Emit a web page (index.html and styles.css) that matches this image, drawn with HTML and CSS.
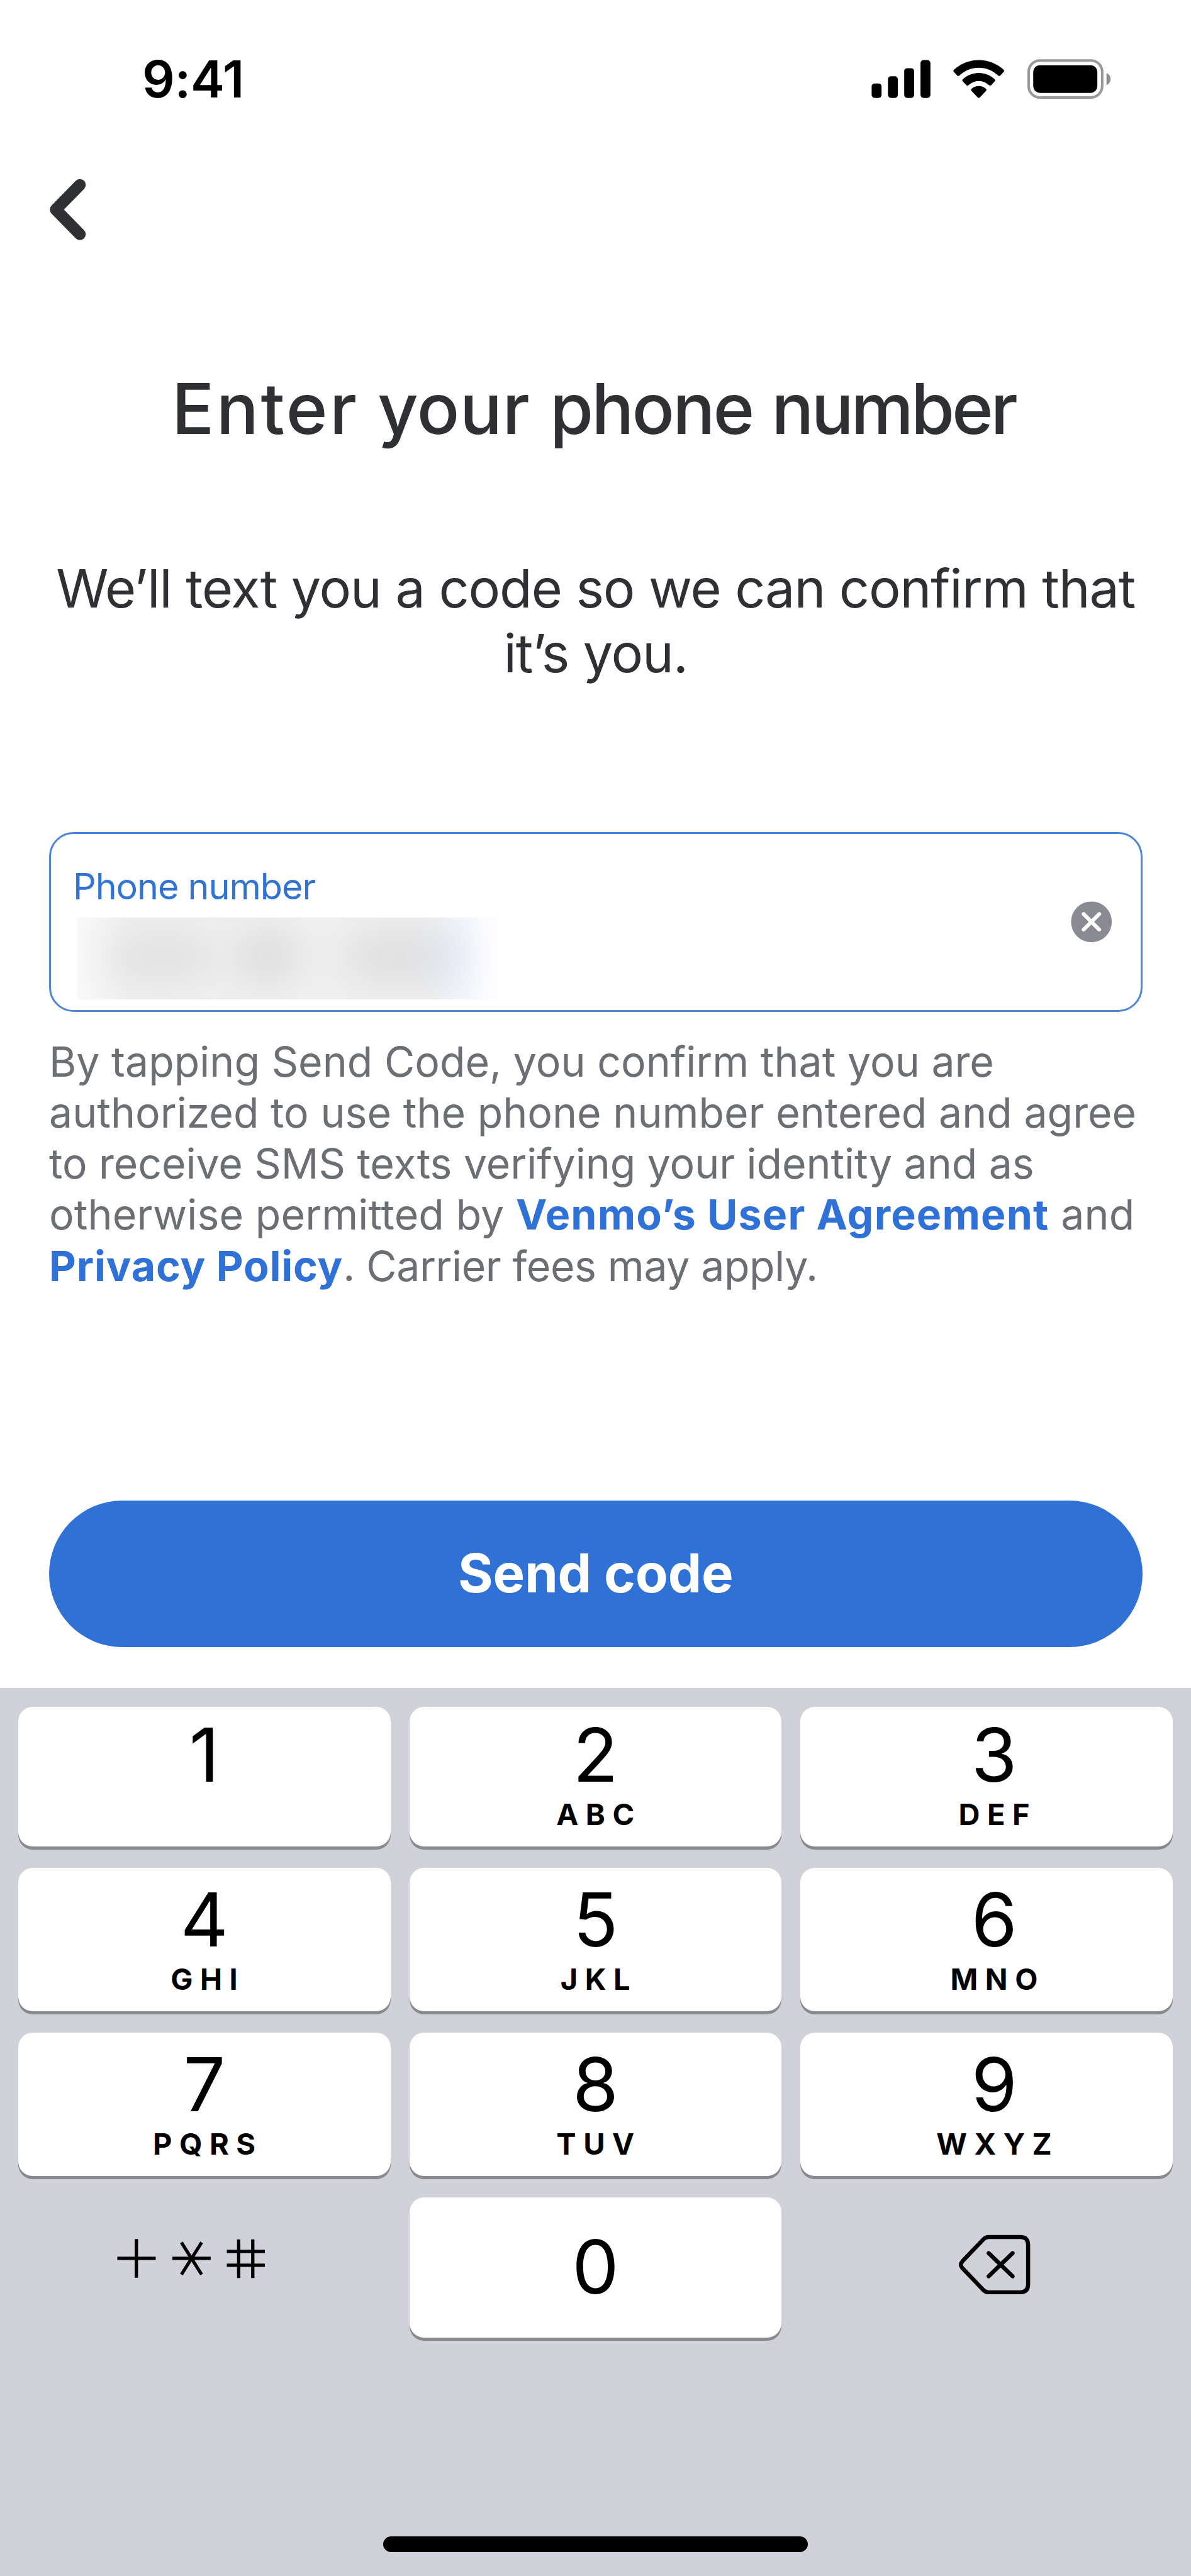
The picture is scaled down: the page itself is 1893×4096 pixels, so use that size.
FILE: index.html
```html
<!DOCTYPE html>
<html lang="en">
<head>
<meta charset="utf-8">
<title>Enter your phone number</title>
<link rel="stylesheet" href="styles.css">
</head>
<body>
<div class="screen">
  <main class="page">
    <div class="status">
      <span class="time">9:41</span>
      <svg class="status-icons" viewBox="1712 112 472 86" aria-hidden="true">
        <rect x="1712.5" y="163.5" width="19.5" height="28.5" rx="6"/>
        <rect x="1744.5" y="149.5" width="19.5" height="42.5" rx="6"/>
        <rect x="1776.5" y="133.5" width="19.5" height="58.5" rx="6"/>
        <rect x="1808.5" y="117.5" width="19.5" height="74.5" rx="6"/>
        <path d="M1923 117.600c18.400 0 35.500 7 48.700 18.900 1.400 1.300 1.400 3 .3 4.300l-6.800 7.200c-1.100 1.200-2.700 1.200-4 .1-10.300-9.700-23.700-15.400-38.200-15.400s-27.900 5.700-38.200 15.400c-1.300 1.100-2.900 1.100-4-.1l-6.800-7.200c-1.100-1.300-1.100-3 .3-4.300 13.200-11.900 30.300-18.900 48.700-18.900z"/>
        <path d="M1923 143c12 0 23 4.600 31.300 12.200 1.300 1.200 1.300 2.900.2 4.100l-7.100 7.600c-1.200 1.200-2.800 1.200-4.100.1-5.400-4.900-12.500-8.500-20.300-8.500s-14.900 3.600-20.300 8.500c-1.300 1.100-2.900 1.100-4.100-.1l-7.100-7.600c-1.100-1.200-1.100-2.900.2-4.100 8.300-7.600 19.300-12.200 31.300-12.200z"/>
        <path d="M1923 168.600c5.400 0 10.400 2 14.200 5.400 1.300 1.200 1.200 2.800.1 4l-12.300 13c-1.200 1.300-2.800 1.300-4 0l-12.300-13c-1.100-1.200-1.200-2.800.1-4 3.800-3.400 8.800-5.400 14.200-5.400z"/>
        <rect x="2021" y="118.500" width="144.500" height="72.500" rx="22" fill="none" stroke="#999" stroke-width="5"/>
        <rect x="2030" y="127.700" width="126" height="54.300" rx="13"/>
        <path d="M2174 143.300c5 2 8 6.500 8 11.700s-3 9.700-8 11.700z" fill="#8c8c8c"/>
      </svg>
    </div>
    <nav class="nav">
      <svg class="back" viewBox="91 345 84 134" role="img" aria-label="Back">
        <path d="M156.500 363.500 109 412l47.500 48.500"/>
      </svg>
    </nav>
    <h1 class="title"><span class="w1">Enter</span> <span class="w2">your</span> <span class="w3">phone</span> <span class="w4">number</span></h1>
    <p class="intro">We’ll text you a code so we can confirm that<br>it’s you.</p>
    <div class="field">
      <div class="field-main">
        <span class="label">Phone number</span>
        <div class="value"><i class="smudge a"></i><i class="smudge b"></i><i class="smudge c"></i><i class="smudge d"></i></div>
      </div>
      <svg class="clear" viewBox="0 0 82 82" role="img" aria-label="Clear">
        <circle cx="41" cy="41" r="40.500"/>
        <path d="M25.500 25.500 56.500 56.500M56.500 25.500 25.500 56.500"/>
      </svg>
    </div>
    <p class="legal">
      <span class="line l1">By tapping Send Code, you confirm that you are</span>
      <span class="line l2">authorized to use the phone number entered and agree</span>
      <span class="line l3">to receive SMS texts verifying your identity and as</span>
      <span class="line l4">otherwise permitted by <a class="link">Venmo’s User Agreement</a> and</span>
      <span class="line l5"><a class="link">Privacy Policy</a>. Carrier fees may apply.</span>
    </p>
    <button class="send">Send code</button>
  </main>
  <section class="keyboard">
    <div class="keys">
      <div class="key"><span class="digit">1</span><span class="letters"></span></div>
      <div class="key"><span class="digit">2</span><span class="letters">ABC</span></div>
      <div class="key right"><span class="digit">3</span><span class="letters">DEF</span></div>
      <div class="key"><span class="digit">4</span><span class="letters">GHI</span></div>
      <div class="key"><span class="digit">5</span><span class="letters">JKL</span></div>
      <div class="key right"><span class="digit">6</span><span class="letters">MNO</span></div>
      <div class="key"><span class="digit">7</span><span class="letters">PQRS</span></div>
      <div class="key"><span class="digit">8</span><span class="letters">TUV</span></div>
      <div class="key right"><span class="digit">9</span><span class="letters">WXYZ</span></div>
      <div class="bare">
        <svg class="symbols" viewBox="36 4319.500 731 276" aria-label="+ * #">
          <path d="M230.500 4439.200h75.500M268 4401.500v76M338.700 4439.200h75.300M356.500 4408l39.700 63M396.200 4408l-39.700 63M445.700 4425.700h74.800M445.700 4452.700h74.800M469 4402v76M496.700 4402v76"/>
        </svg>
      </div>
      <div class="key zero"><span class="digit">0</span></div>
      <div class="bare">
        <svg class="delete" viewBox="1572 4319.500 731 276" role="img" aria-label="Delete">
          <path d="M1942 4397.500H2004Q2019.500 4397.500 2019.500 4413V4490.500Q2019.500 4506 2004 4506H1942Q1936 4506 1931 4501L1890.500 4458.500Q1884.500 4451.700 1890.500 4445L1931 4402.500Q1936 4397.500 1942 4397.500Z"/>
          <path d="M1942 4429l47 45.500M1989 4429l-47 45.500"/>
        </svg>
      </div>
    </div>
    <div class="home"></div>
  </section>
</div>
</body>
</html>
```
FILE: styles.css
```css
* { box-sizing: border-box; }
body {
  margin: 0;
  background: #fefefe;
  font-family: Inter, "Liberation Sans", sans-serif;
}
.screen {
  display: flex;
  flex-direction: column;
  width: 1893px;
  height: 4096px;
  overflow: hidden;
}
.page {
  display: flex;
  flex-direction: column;
  height: 2683.500px;
  padding: 0 77.500px 0 78px;
  color: #2f3033;
}
.status {
  display: flex;
  justify-content: space-between;
  align-items: center;
  height: 252px;
  padding: 0 48.500px 0 148px;
  color: #000;
}
.time { font-size: 81px; font-weight: 600; line-height: 100px; letter-spacing: -.300px; }
.status-icons { width: 381.800px; height: 69.600px; }
.nav { height: 135.500px; padding-top: 27px; }
.back { display: block; width: 68px; height: 108.400px; margin-left: -4.400px; }
.back path {
  fill: none; stroke: #2f3033; stroke-width: 23;
  stroke-linecap: round; stroke-linejoin: round;
}
.title {
  margin: 191px 0 0;
  padding-right: 7px;
  font-size: 112px;
  font-weight: 500;
  line-height: 140px;
  text-align: center;
  white-space: nowrap;
}
.w1 { letter-spacing: 3.300px; }
.w2 { letter-spacing: .300px; }
.w3 { letter-spacing: -3px; margin-left: 2px; }
.w4 { letter-spacing: -4.200px; }
.intro {
  margin: 165px -40px 0;
  font-size: 84.500px;
  line-height: 103.500px;
  letter-spacing: -1.150px;
  text-align: center;
  white-space: nowrap;
}
.field {
  display: flex;
  justify-content: space-between;
  align-items: center;
  height: 286px;
  margin-top: 232px;
  padding: 0 45px 0 35px;
  border: 3px solid #4a86d6;
  border-radius: 39px;
}
.field-main { align-self: stretch; padding-top: 48.500px; }
.label {
  display: block;
  font-size: 57.500px;
  line-height: 70px;
  letter-spacing: -1.050px;
  color: #3173d2;
}
.value {
  position: relative;
  width: 668px;
  height: 130px;
  margin: 15px 0 0 6px;
  overflow: hidden;
  background: linear-gradient(90deg, #f9f9f9 0, #f0f0f0 12%, #f0f0f0 84%, #f3f6fc 92%, #fefefe 100%);
}
.smudge { position: absolute; top: 18px; height: 88px; border-radius: 44px; background: #e3e3e3; filter: blur(28px); }
.smudge.a { left: 50px; width: 170px; }
.smudge.b { left: 250px; width: 105px; background: #dedede; }
.smudge.c { left: 425px; width: 155px; background: #e0e0e0; }
.smudge.d { left: 570px; width: 32px; background: #d8e0f0; }
.clear { width: 65.500px; height: 65.500px; }
.clear circle { fill: #8a8b92; }
.clear path { stroke: #fff; stroke-width: 7.500; stroke-linecap: round; }
.legal {
  margin: 39px 0 0;
  font-size: 66.200px;
  line-height: 81.300px;
  color: #6b6e73;
  white-space: nowrap;
}
.line { display: block; }
.l3 { letter-spacing: -.080px; }
.l4 { letter-spacing: .100px; }
.l5 { letter-spacing: -.400px; }
.link { color: #2f71d6; font-weight: 700; letter-spacing: 1.200px; }
.l5 .link { letter-spacing: .850px; }
.send {
  height: 233px;
  margin: 332px 0 0;
  border: 0;
  border-radius: 117px;
  background: #3071d6;
  color: #fff;
  font: 700 85px/100px Inter, "Liberation Sans", sans-serif;
  letter-spacing: -.200px;
}
.keyboard {
  display: flex;
  flex-direction: column;
  flex: 1;
  align-items: center;
  justify-content: space-between;
  padding: 30px 29px 38px;
  background: #d1d1da;
}
.keys {
  display: grid;
  grid-template-columns: repeat(3, 1fr);
  grid-template-rows: 222.700px 228px 228px 223.300px;
  gap: 34px 30.200px;
  width: 100%;
}
.key {
  display: flex;
  flex-direction: column;
  align-items: center;
  justify-content: flex-end;
  padding-bottom: 24px;
  border-radius: 23px;
  background: #fefefe;
  box-shadow: 0 5px 0 #88898d;
  color: #000;
}
.key.right { padding-left: 24px; }
.key.zero { justify-content: center; padding-bottom: 3px; }
.digit { font-size: 118px; line-height: 100px; }
.letters {
  height: 54px;
  margin: 18px -11px 0 0;
  font-size: 47px;
  font-weight: 700;
  line-height: 54px;
  letter-spacing: 11.500px;
}
.bare svg { display: block; width: 100%; height: 100%; fill: none; stroke: #000; }
.symbols { stroke-width: 6.500; }
.delete { stroke-width: 8; stroke-linecap: round; stroke-linejoin: round; }
.home { width: 675px; height: 25px; border-radius: 12.500px; background: #000; }
```
